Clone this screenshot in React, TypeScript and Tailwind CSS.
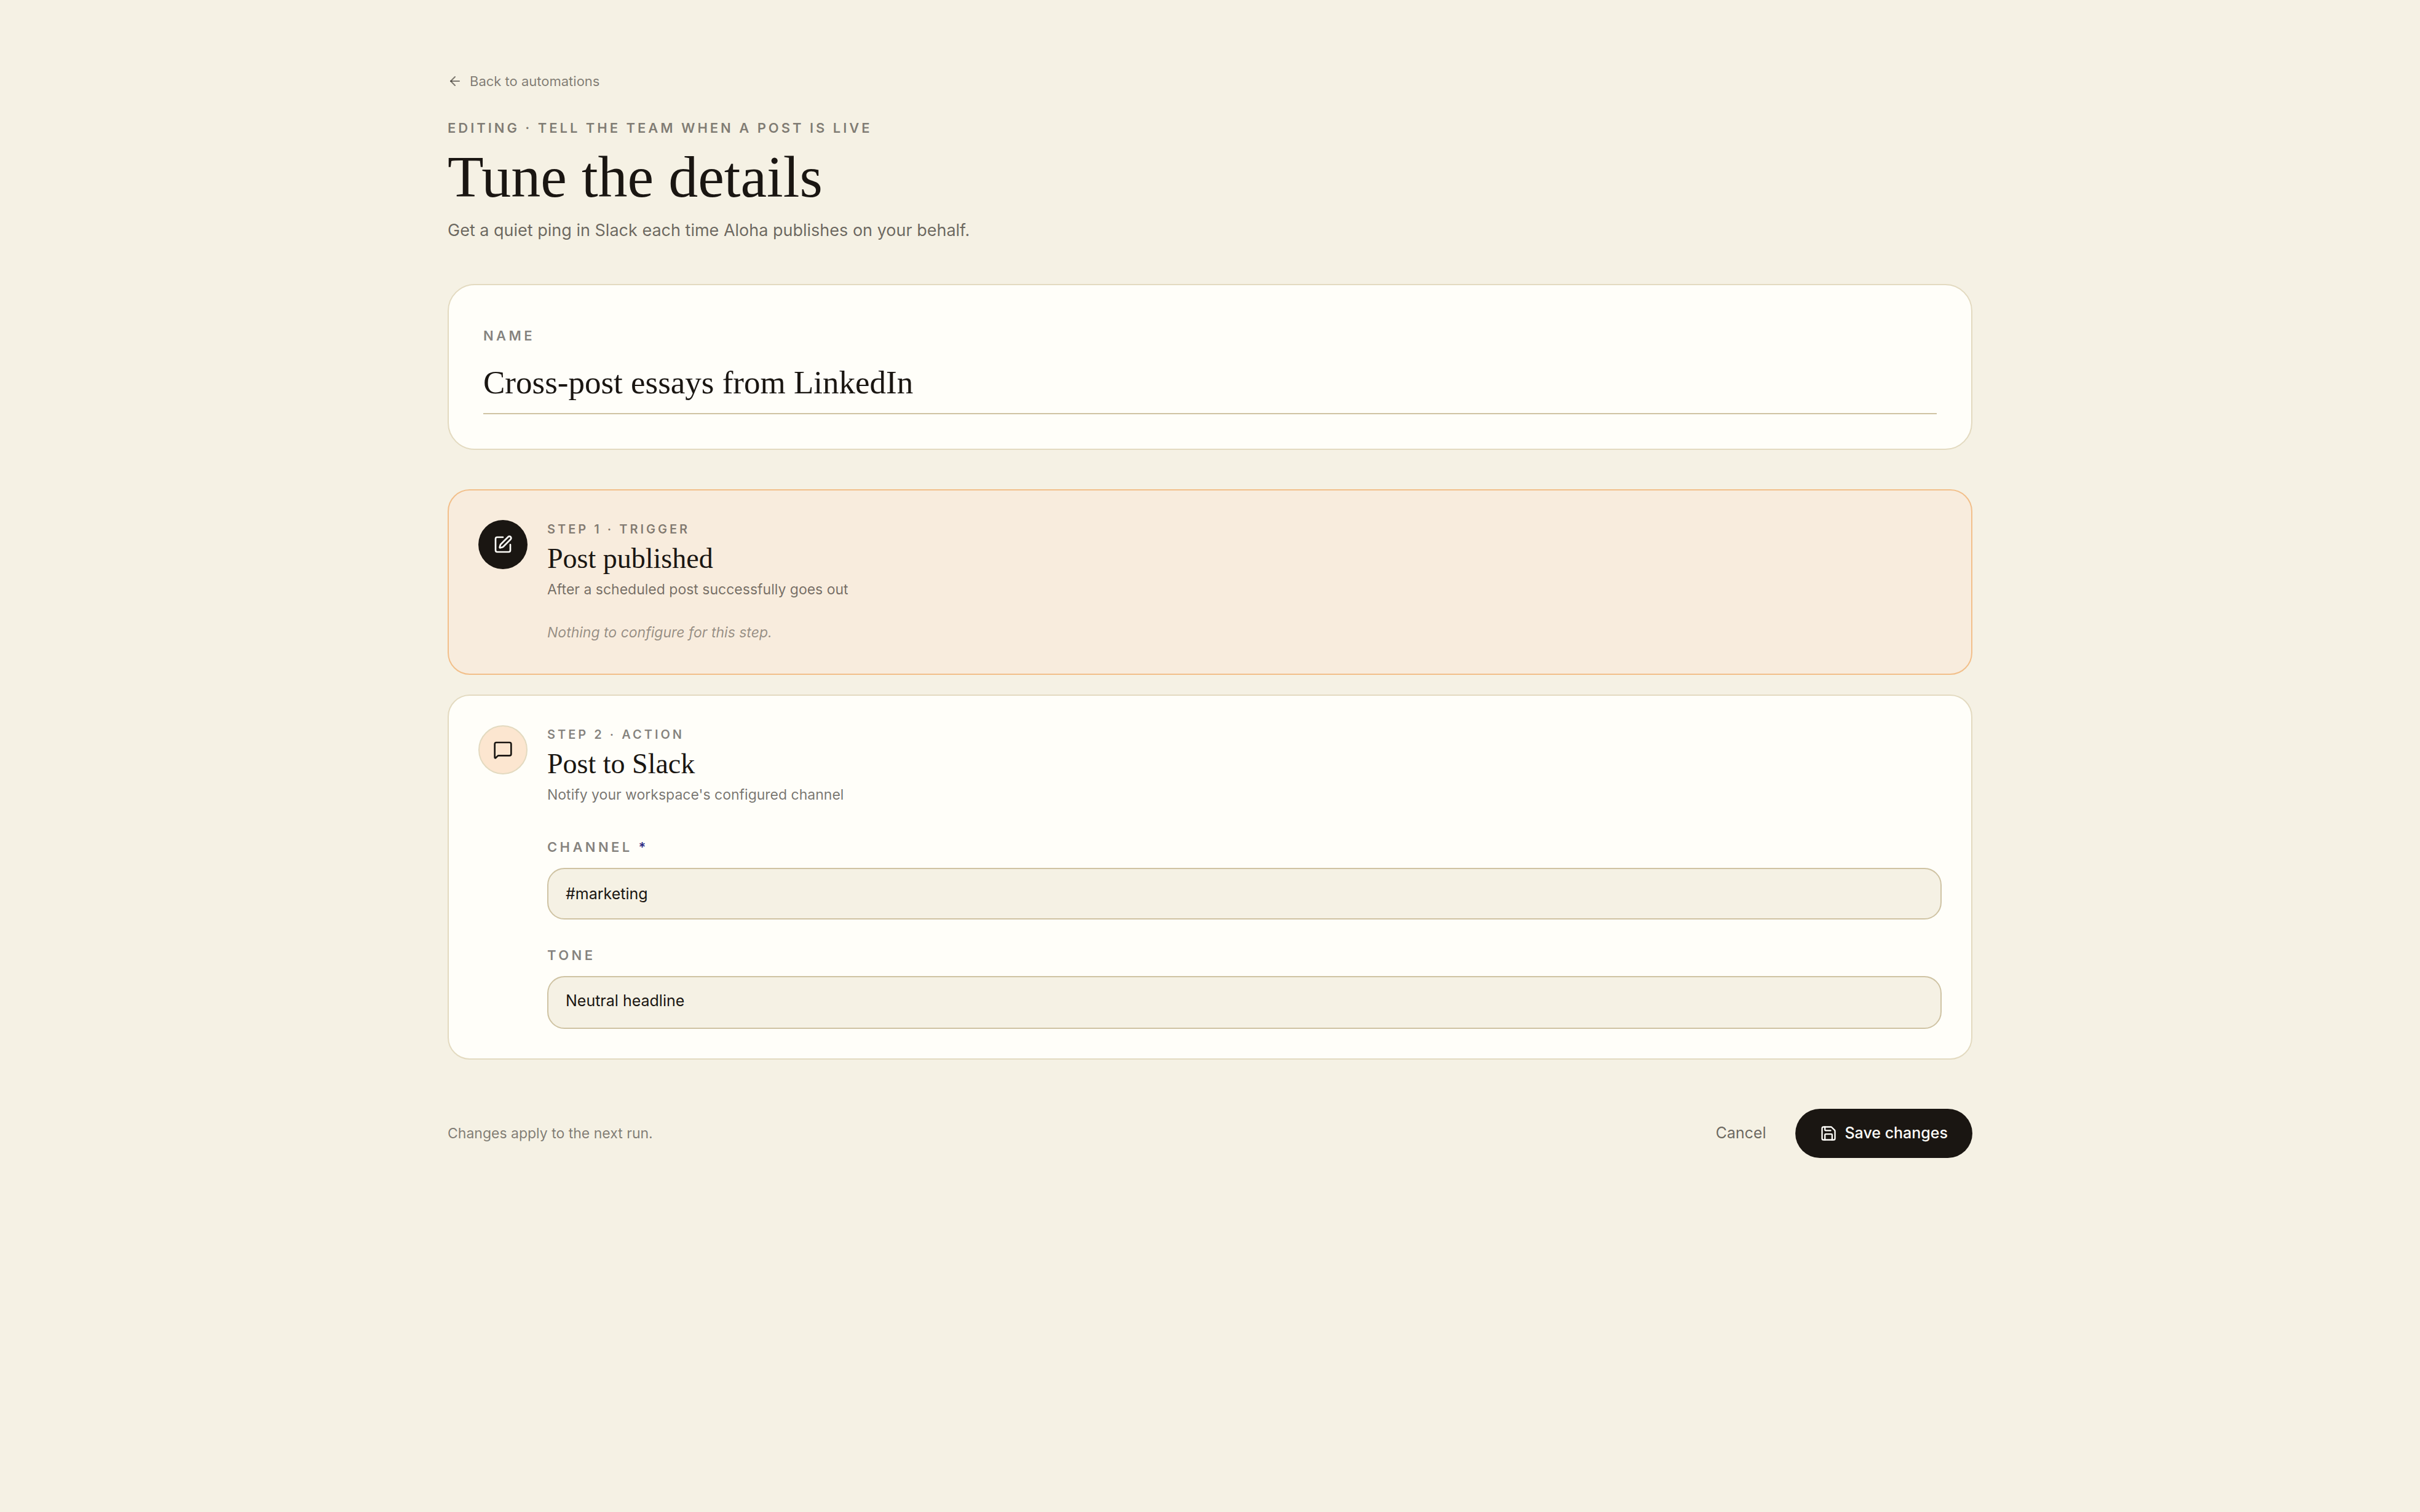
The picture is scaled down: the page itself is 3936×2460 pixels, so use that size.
import type { ReactNode } from "react";
import { ArrowLeft, MessageSquare, Save, SquarePen } from "lucide-react";

const eyebrow = "font-semibold uppercase text-[#1a1612]/55";
const label = `${eyebrow} block text-[22px] leading-[32px] tracking-[0.2em]`;
const field =
  "mt-[18px] block w-full rounded-[28px] border-2 border-[#cfc3a3] bg-[#f5f1e4] px-7 text-[25px] outline-none";

interface StepProps {
  kicker: string;
  title: string;
  description: string;
  icon: ReactNode;
  trigger?: boolean;
  children: ReactNode;
}

function StepCard({ kicker, title, description, icon, trigger, children }: StepProps) {
  return (
    <section
      className={`flex items-start gap-8 rounded-[36px] border-2 p-12 ${
        trigger ? "border-[#f2bf8a] bg-[#f8ecdd]" : "border-[#e3dac0] bg-[#fffef9]"
      }`}
    >
      <span
        className={`grid size-20 shrink-0 place-items-center rounded-full ${
          trigger ? "bg-[#1a1612] text-[#fffef9]" : "border-2 border-[#e3dac0] bg-[#fce6d0] text-[#1a1612]"
        }`}
      >
        {icon}
      </span>
      <div className="min-w-0 flex-1">
        <p className={`${eyebrow} text-[20px] leading-[30px] tracking-[0.2em]`}>{kicker}</p>
        <h2 className="mt-1 font-['Liberation_Serif',serif] text-[46px] leading-[58px] text-[#1a1612]">{title}</h2>
        <p className="mt-1 text-[23px] leading-[34px] text-[#1a1612]/60">{description}</p>
        {children}
      </div>
    </section>
  );
}

export default function App() {
  return (
    <div className="min-h-screen bg-[#f5f1e4] font-['Inter',sans-serif] text-[#1a1612]">
      <main className="mx-auto max-w-[2480px] pt-28">
        <a href="#automations" className="inline-flex items-center gap-3 text-[22px] leading-[40px] text-[#1a1612]/55">
          <ArrowLeft className="size-6" strokeWidth={2} />
          Back to automations
        </a>

        <header className="mt-10">
          <p className={`${eyebrow} text-[22px] leading-[32px] tracking-[0.18em]`}>
            Editing · Tell the team when a post is live
          </p>
          <h1 className="mt-4 font-['Liberation_Serif',serif] text-[96px] leading-[96px]">Tune the details</h1>
          <p className="mt-4 text-[27px] leading-[46px] text-[#1a1612]/65">
            Get a quiet ping in Slack each time Aloha publishes on your behalf.
          </p>
        </header>

        <form onSubmit={(e) => e.preventDefault()}>
          <section className="mt-16 rounded-[44px] border-2 border-[#e3dac0] bg-[#fffef9] p-14">
            <label htmlFor="name" className={`${eyebrow} block text-[22px] leading-[52px] tracking-[0.2em]`}>
              Name
            </label>
            <input
              id="name"
              defaultValue="Cross-post essays from LinkedIn"
              className="mt-1 block h-[98px] w-full border-b-2 border-[#cfc3a3] bg-transparent pb-1 font-['Liberation_Serif',serif] text-[53px] outline-none"
            />
          </section>

          <div className="mt-16 flex flex-col gap-8">
            <StepCard
              trigger
              kicker="Step 1 · Trigger"
              title="Post published"
              description="After a scheduled post successfully goes out"
              icon={<SquarePen className="size-8" strokeWidth={2} />}
            >
              <p className="mt-[34px] text-[23px] leading-[38px] text-[#1a1612]/45 italic">
                Nothing to configure for this step.
              </p>
            </StepCard>

            <StepCard
              kicker="Step 2 · Action"
              title="Post to Slack"
              description="Notify your workspace's configured channel"
              icon={<MessageSquare className="size-8" strokeWidth={2} />}
            >
              <label htmlFor="channel" className={`${label} mt-[52px]`}>
                Channel <span className="text-[#2e2a85]">*</span>
              </label>
              <input id="channel" required defaultValue="#marketing" className={`${field} h-[84px]`} />
              <label htmlFor="tone" className={`${label} mt-[42px]`}>
                Tone
              </label>
              <select id="tone" className={`${field} h-[86px] appearance-none pb-1`}>
                <option>Neutral headline</option>
              </select>
            </StepCard>
          </div>

          <footer className="mt-20 flex items-center justify-between">
            <p className="text-[23px] leading-[36px] text-[#1a1612]/55">Changes apply to the next run.</p>
            <div className="flex items-center gap-12 text-[25px]">
              <button type="button" className="text-[#1a1612]/65">
                Cancel
              </button>
              <button
                type="submit"
                className="flex h-20 items-center gap-3 rounded-full bg-[#1a1612] px-10 font-medium text-[#fffef9]"
              >
                <Save className="size-7" strokeWidth={2} />
                Save changes
              </button>
            </div>
          </footer>
        </form>
      </main>
    </div>
  );
}
